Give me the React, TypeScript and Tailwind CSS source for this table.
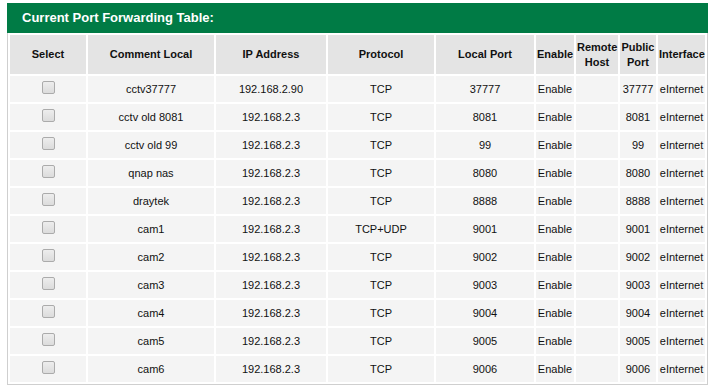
import React from 'react';

type Rule = {
  comment: string;
  ip: string;
  protocol: string;
  localPort: string;
  enable: string;
  remoteHost: string;
  publicPort: string;
  iface: string;
};

const RULES: Rule[] = [
  { comment: 'cctv37777', ip: '192.168.2.90', protocol: 'TCP', localPort: '37777', enable: 'Enable', remoteHost: '', publicPort: '37777', iface: 'eInternet' },
  { comment: 'cctv old 8081', ip: '192.168.2.3', protocol: 'TCP', localPort: '8081', enable: 'Enable', remoteHost: '', publicPort: '8081', iface: 'eInternet' },
  { comment: 'cctv old 99', ip: '192.168.2.3', protocol: 'TCP', localPort: '99', enable: 'Enable', remoteHost: '', publicPort: '99', iface: 'eInternet' },
  { comment: 'qnap nas', ip: '192.168.2.3', protocol: 'TCP', localPort: '8080', enable: 'Enable', remoteHost: '', publicPort: '8080', iface: 'eInternet' },
  { comment: 'draytek', ip: '192.168.2.3', protocol: 'TCP', localPort: '8888', enable: 'Enable', remoteHost: '', publicPort: '8888', iface: 'eInternet' },
  { comment: 'cam1', ip: '192.168.2.3', protocol: 'TCP+UDP', localPort: '9001', enable: 'Enable', remoteHost: '', publicPort: '9001', iface: 'eInternet' },
  { comment: 'cam2', ip: '192.168.2.3', protocol: 'TCP', localPort: '9002', enable: 'Enable', remoteHost: '', publicPort: '9002', iface: 'eInternet' },
  { comment: 'cam3', ip: '192.168.2.3', protocol: 'TCP', localPort: '9003', enable: 'Enable', remoteHost: '', publicPort: '9003', iface: 'eInternet' },
  { comment: 'cam4', ip: '192.168.2.3', protocol: 'TCP', localPort: '9004', enable: 'Enable', remoteHost: '', publicPort: '9004', iface: 'eInternet' },
  { comment: 'cam5', ip: '192.168.2.3', protocol: 'TCP', localPort: '9005', enable: 'Enable', remoteHost: '', publicPort: '9005', iface: 'eInternet' },
  { comment: 'cam6', ip: '192.168.2.3', protocol: 'TCP', localPort: '9006', enable: 'Enable', remoteHost: '', publicPort: '9006', iface: 'eInternet' },
];

const Checkbox = () => (
  <span className="inline-block w-[13px] h-[13px] -mt-[4px] align-middle rounded-[2px] border border-[#ababab] bg-gradient-to-b from-[#ededed] to-[#dcdcdc]"></span>
);

const th = 'bg-[#e4e4e4] font-bold px-[1px] leading-[15px] text-center';
const td = 'bg-[#f4f4f4] px-[1px] text-center whitespace-nowrap';

const App: React.FC = () => {
  return (
    <div className="bg-white min-h-[391px] pt-[3px] pl-[7px] text-[#111] text-[11px]" style={{ fontFamily: '"Liberation Sans", Arial, sans-serif' }}>
      <div className="w-[701px]">
        {/* Title bar */}
        <div className="h-[30px] bg-[#007b45] flex items-center pl-[15px]">
          <h3 className="text-white font-bold text-[13px]">Current Port Forwarding Table:</h3>
        </div>

        <div className="border border-t-0 border-[#cfcfcf]">
          <table className="table-fixed w-[699px] border-separate border-spacing-[2px]">
            <colgroup>
              <col className="w-[76px]" />
              <col className="w-[126px]" />
              <col className="w-[110px]" />
              <col className="w-[106px]" />
              <col className="w-[98px]" />
              <col className="w-[38px]" />
              <col className="w-[42px]" />
              <col className="w-[36px]" />
              <col className="w-[47px]" />
            </colgroup>
            <thead>
              <tr className="h-[39px]">
                <th className={th}>Select</th>
                <th className={th}>Comment Local</th>
                <th className={th}>IP Address</th>
                <th className={th}>Protocol</th>
                <th className={th}>Local Port</th>
                <th className={th}>Enable</th>
                <th className={th}>Remote Host</th>
                <th className={th}>Public Port</th>
                <th className={th}>Interface</th>
              </tr>
            </thead>
            <tbody>
              {RULES.map((r) => (
                <tr key={r.comment} className="h-[26px]">
                  <td className={td}><Checkbox /></td>
                  <td className={td}>{r.comment}</td>
                  <td className={td}>{r.ip}</td>
                  <td className={td}>{r.protocol}</td>
                  <td className={td}>{r.localPort}</td>
                  <td className={td}>{r.enable}</td>
                  <td className={td}>{r.remoteHost}</td>
                  <td className={td}>{r.publicPort}</td>
                  <td className={td}>{r.iface}</td>
                </tr>
              ))}
            </tbody>
          </table>
        </div>
      </div>
    </div>
  );
};

export default App;
